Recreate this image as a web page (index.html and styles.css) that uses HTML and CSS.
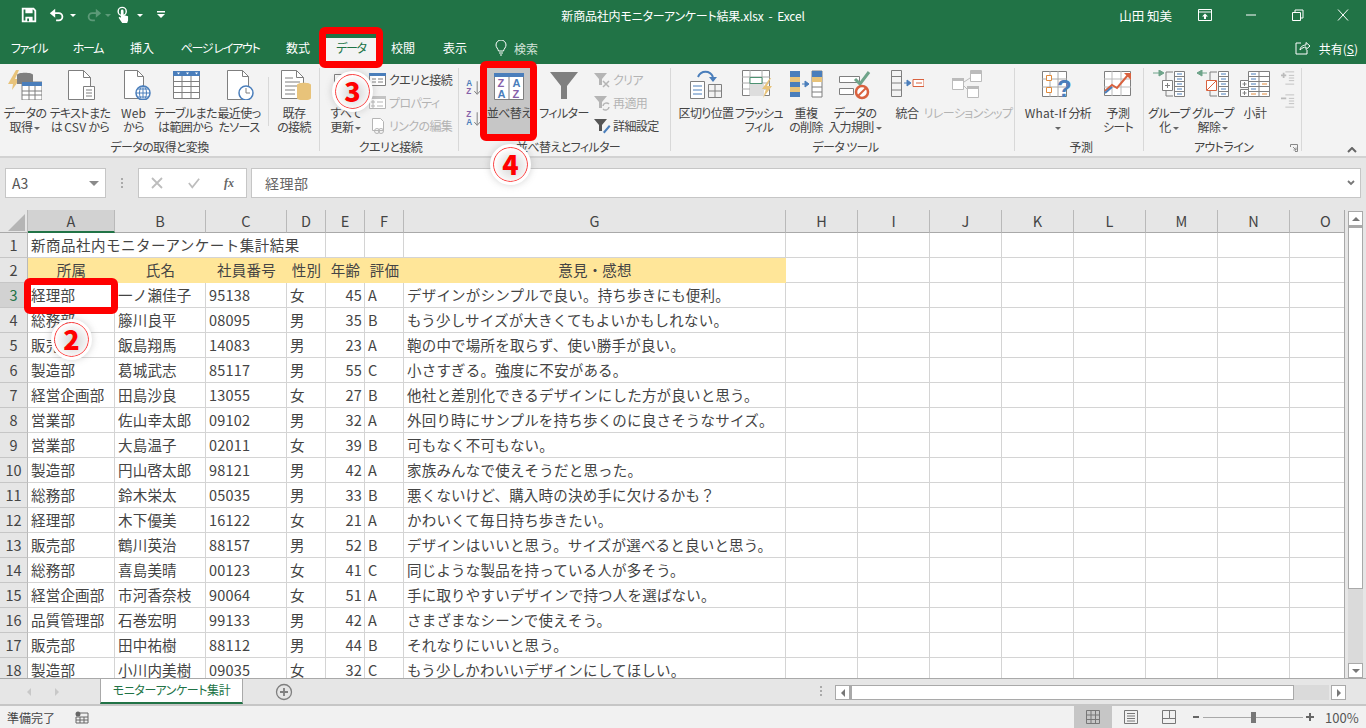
FILE: index.html
```html
<!DOCTYPE html>
<html lang="ja">
<head>
<meta charset="utf-8">
<title>新商品社内モニターアンケート結果.xlsx - Excel</title>
<link rel="stylesheet" href="styles.css">
</head>
<body>
<div class="app">
  <header class="titlebar">
    <div class="qat">
      <svg class="ic20" viewBox="0 0 20 20"><path d="M3 3h12l2 2v12H3z" fill="none" stroke="#fff" stroke-width="2"/><path d="M6 3h8v5H6zM6 12h8v5H6z" fill="#fff"/><path d="M8 14h2v3H8z" fill="#217346"/></svg>
      <svg class="ic20 m10" viewBox="0 0 20 20"><path d="M4 8h8a4 4 0 0 1 0 8H9" fill="none" stroke="#fff" stroke-width="2"/><path d="M8 3v10L2 8z" fill="#fff"/></svg>
      <span class="caret white"></span>
      <svg class="ic20 m9" viewBox="0 0 20 20"><path d="M16 8H8a4 4 0 0 0 0 8h3" fill="none" stroke="#5c9a78" stroke-width="2"/><path d="M12 3v10l6-5z" fill="#5c9a78"/></svg>
      <span class="caret faded"></span>
      <svg class="ic20 m4" viewBox="0 0 20 20"><circle cx="8" cy="6" r="4.500" fill="none" stroke="#fff" stroke-width="1.600"/><path d="M6.500 5.500a1.500 1.500 0 0 1 3 0V10l5 1.500V16l-1 3H8L4 13l1-1 1.500 1z" fill="#fff"/></svg>
      <span class="caret white"></span>
      <svg class="custom" viewBox="0 0 10 10"><path d="M1 1h8v1.500H1zM1 4h8L5 8z" fill="#fff"/></svg>
    </div>
    <div class="doc-title">新商品社内モニターアンケート結果.xlsx &nbsp;-&nbsp; Excel</div>
    <div class="win">
      <span class="user">山田 知美</span>
      <svg class="winic" viewBox="0 0 14 12"><path d="M.5.500h13v11H.500zM.5 3h13" fill="none" stroke="#fff"/><path d="M7 4.500l3 3H8V10H6V7.500H4z" fill="#fff"/></svg>
      <svg class="winic" viewBox="0 0 14 12"><path d="M2 6h10" stroke="#fff"/></svg>
      <svg class="winic" viewBox="0 0 14 12"><path d="M2.500 3.500h8v8h-8zM5 3.500V1h8v8h-2.500" fill="none" stroke="#fff"/></svg>
      <svg class="winic" viewBox="0 0 14 12"><path d="M2 .5l10 11M12 .5l-10 11" stroke="#fff" fill="none"/></svg>
    </div>
  </header>

  <nav class="tabs">
    <span class="tab kana w58">ファイル</span>
    <span class="tab kana w60">ホーム</span>
    <span class="tab w48">挿入</span>
    <span class="tab kana w108">ページ レイアウト</span>
    <span class="tab w48">数式</span>
    <span class="tab kana w58 active">データ</span>
    <span class="tab w46">校閲</span>
    <span class="tab w58">表示</span>
    <span class="search">
      <svg class="bulb" viewBox="0 0 12 16"><path d="M3.500 11C3 8.500 1 7.500 1 5a5 5 0 0 1 10 0c0 2.500-2 3.500-2.500 6zM4 13h4M5 15h2" fill="none" stroke="#fff"/></svg>
      <span>検索</span>
    </span>
    <span class="share">
      <svg class="shareic" viewBox="0 0 16 14"><path d="M6 2H1v11h11V9" fill="none" stroke="#fff"/><path d="M5 9c0-3 3-5 6-5V1.500L15 5l-4 3.500V6C9 6 7 7 5 9z" fill="none" stroke="#fff"/></svg>
      <span>共有(<u>S</u>)</span>
    </span>
  </nav>

  <section class="ribbon">
    <div class="group g1">
      <div class="gbody">
        <div class="big w50"><svg class="bi" viewBox="0 0 34 30"><path d="M8 0L0 14h5l-1 6L12 9H7l4-9z" fill="#e8c37a"/><path d="M9 5c0-3 16-3 16 0v9H9z" fill="#7f7f7f"/><path d="M14 12h20v18H14z" fill="#fff" stroke="#7f7f7f"/><path d="M14 12h20v4H14z" fill="#4a7ebb"/><path d="M14 21h20M14 25h20M21 16v14M27 16v14" stroke="#7f7f7f" fill="none"/></svg><span class="lb">データの<br>取得 <i class="caret"></i></span></div>
        <div class="big w60"><svg class="bi" viewBox="0 0 34 30"><path d="M5.500.5h15l7 7v22h-22z" fill="#fff" stroke="#7f7f7f"/><path d="M20.500.5v7h7" fill="none" stroke="#7f7f7f"/><path d="M20.500 16.500h11v13h-11z" fill="#fff" stroke="#7f7f7f"/><path d="M23 20h6M23 23h6M23 26h6" stroke="#7f7f7f"/></svg><span class="lb">テキストまた<br>は <span class="lat">CSV</span> から</span></div>
        <div class="big w47"><svg class="bi" viewBox="0 0 34 30"><path d="M7.500.5h13l6 6v22h-19z" fill="#fff" stroke="#7f7f7f"/><path d="M20.500.5v6h6" fill="none" stroke="#7f7f7f"/><circle cx="26" cy="23" r="7" fill="#fff" stroke="#4a7ebb" stroke-width="1.500"/><path d="M19 23h14M26 16v14M21 19h10M21 27h10" stroke="#4a7ebb"/><ellipse cx="26" cy="23" rx="3.500" ry="7" fill="none" stroke="#4a7ebb"/></svg><span class="lb"><span class="lat">Web</span><br>から</span></div>
        <div class="big w57"><svg class="bi" viewBox="0 0 34 30"><path d="M4.500 1.500h26v27h-26z" fill="#fff" stroke="#7f7f7f"/><path d="M4 1h27v5H4z" fill="#4a7ebb"/><path d="M4 11.500h27M4 16.500h27M4 22.500h27M13 6v23M22 6v23" stroke="#7f7f7f" fill="none"/><path d="M8 2.500l1.500 2 1.500-2zM17 2.500l1.500 2 1.500-2zM26 2.500l1.500 2 1.500-2z" fill="#fff"/></svg><span class="lb">テーブルまた<br>は範囲から</span></div>
        <div class="big w50"><svg class="bi" viewBox="0 0 34 30"><path d="M5.500.5h15l6 6v23h-21z" fill="#fff" stroke="#7f7f7f"/><path d="M20.500.5v6h6" fill="none" stroke="#7f7f7f"/><circle cx="24" cy="23" r="7" fill="#fff" stroke="#4a7ebb" stroke-width="1.500"/><path d="M24 18v5h4" stroke="#7f7f7f" fill="none"/></svg><span class="lb">最近使っ<br>たソース</span></div>
        <div class="inner-sep"></div>
        <div class="big w44"><svg class="bi" viewBox="0 0 34 30"><path d="M4.500.5h15l7 7v21h-22z" fill="#fff" stroke="#7f7f7f"/><path d="M19.500.5v7h7M8 8h8M8 12h15M8 16h15M8 20h10M8 24h10" fill="none" stroke="#7f7f7f"/><path d="M20 15c0-3 14-3 14 0v13c0 3-14 3-14 0z" fill="#e8c37a"/></svg><span class="lb">既存<br>の接続</span></div>
      </div>
      <div class="glabel">データの取得と変換</div>
    </div>

    <div class="group g2">
      <div class="gbody">
        <div class="big w46"><svg class="bi" viewBox="0 0 34 30"><path d="M5.500 4.500h16v20h-16z" fill="#fff" stroke="#7f7f7f"/></svg><span class="lb">すべて<br>更新 <i class="caret"></i></span></div>
        <div class="smalls">
          <div class="sm"><svg class="si" viewBox="0 0 18 16"><path d="M.5 1.500h16v12H.500z" fill="#fff" stroke="#7f7f7f"/><path d="M0 1h17v3H0z" fill="#4a7ebb"/><path d="M3 7h4M3 10h4M9 7h5M9 10h5" stroke="#7f7f7f"/></svg>クエリと接続</div>
          <div class="sm off"><svg class="si" viewBox="0 0 18 16"><path d="M.5 1.500h16v12H.500z" fill="#fff" stroke="#b5b5b5"/><path d="M0 1h17v3H0z" fill="#c4c4c4"/><path d="M3 6h2v2H3zM3 10h2v2H3zM8 7h6M8 11h6" stroke="#b5b5b5" fill="none"/></svg>プロパティ</div>
          <div class="sm off"><svg class="si" viewBox="0 0 18 16"><path d="M3.500.5h8l3 3v9h-11z" fill="#fff" stroke="#b5b5b5"/><circle cx="8" cy="13" r="2.500" fill="none" stroke="#b5b5b5"/><circle cx="12" cy="13" r="2.500" fill="none" stroke="#b5b5b5"/></svg>リンクの編集</div>
        </div>
      </div>
      <div class="glabel">クエリと接続</div>
    </div>

    <div class="group g3">
      <div class="gbody">
        <div class="sorts">
          <svg class="sorti" viewBox="0 0 18 22"><text x="0" y="10" class="az blue">A</text><text x="0" y="20" class="az purple">Z</text><path d="M13.500 4v15M10 16l3.500 4 3.500-4" fill="none" stroke="#666"/></svg>
          <svg class="sorti" viewBox="0 0 18 22"><text x="0" y="10" class="az purple">Z</text><text x="0" y="20" class="az blue">A</text><path d="M13.500 4v15M10 16l3.500 4 3.500-4" fill="none" stroke="#666"/></svg>
        </div>
        <div class="big w46 pressed"><svg class="bi sortbig" viewBox="0 0 30 27"><path d="M.5.500h29v26H.500z" fill="#fff" stroke="#7f7f7f"/><path d="M0 0h30v4H0z" fill="#4a7ebb"/><path d="M15 4v23" stroke="#7f7f7f"/><text x="3.500" y="14" class="azb purple">Z</text><text x="3.500" y="25" class="azb blue">A</text><text x="18.500" y="14" class="azb blue">A</text><text x="18.500" y="25" class="azb purple">Z</text></svg><span class="lb">並べ替え</span></div>
        <div class="big w54 ml"><svg class="bi" viewBox="0 0 34 30"><path d="M3 2h28L20 16v13h-6V16z" fill="#7f7f7f"/></svg><span class="lb">フィルター</span></div>
        <div class="smalls s3">
          <div class="sm off"><svg class="si" viewBox="0 0 18 16"><path d="M1 1h13L9 7v6H6V7z" fill="#b5b5b5"/><path d="M10 9l6 6M16 9l-6 6" stroke="#b5b5b5" stroke-width="1.500"/></svg>クリア</div>
          <div class="sm off"><svg class="si" viewBox="0 0 18 16"><path d="M1 1h13L9 7v6H6V7z" fill="#b5b5b5"/><path d="M10 11a3.500 3.500 0 0 1 6-2M16 12a3.500 3.500 0 0 1-6 2" fill="none" stroke="#b5b5b5" stroke-width="1.500"/></svg>再適用</div>
          <div class="sm"><svg class="si" viewBox="0 0 18 16"><path d="M1 1h13L9 7v6H6V7z" fill="#555"/><path d="M10 14l6-7 1.500 1.500-6 7z" fill="#4a7ebb"/></svg>詳細設定</div>
        </div>
      </div>
      <div class="glabel">並べ替えとフィルター</div>
    </div>

    <div class="group g4">
      <div class="gbody">
        <div class="big w58"><svg class="bi wide" viewBox="0 0 34 30"><path d="M1.500 11.500h14v17h-14z" fill="#fff" stroke="#7f7f7f"/><path d="M4 16h9M4 20h9M4 24h9" stroke="#4a7ebb"/><path d="M19.500 14.500h13v13h-13zM19.500 21h13M26 14.500v13" fill="none" stroke="#7f7f7f"/><path d="M9 7c3-7 12-7 15 0" fill="none" stroke="#4a7ebb" stroke-width="2"/><path d="M20 7h8l-4 5z" fill="#4a7ebb"/></svg><span class="lb">区切り位置</span></div>
        <div class="big w48"><svg class="bi" viewBox="0 0 34 30"><path d="M.5.500h27v25H.500z" fill="#fff" stroke="#7f7f7f"/><path d="M0 7h28M0 13h28M0 19h28M8 0v26M20 0v26" stroke="#aaa"/><path d="M8 7.500h12v6H8z" fill="#fff" stroke="#4c9272"/><path d="M8 14h14v12H8z" fill="#ddd"/><path d="M28 8l-8 11h4l-3 9 9-12h-5l4-8z" fill="#e8c37a"/></svg><span class="lb">フラッシュ<br>フィル</span></div>
        <div class="big w46"><svg class="bi" viewBox="0 0 34 30"><path d="M1 1h10v26H1z" fill="#4a7ebb"/><path d="M1 7h10v5H1zM1 17h10v5H1z" fill="#e8c37a"/><path d="M23 1h10v26H23z" fill="#fff" stroke="#7f7f7f"/><path d="M23 1h10v6H23z" fill="#4a7ebb"/><path d="M23 7h10v5H23z" fill="#e8c37a"/><path d="M23 17h10M23 22h10" stroke="#7f7f7f"/><path d="M13 14h5M16 11l4 3-4 3z" fill="#4a7ebb" stroke="#4a7ebb"/></svg><span class="lb">重複<br>の削除</span></div>
        <div class="big w52"><svg class="bi" viewBox="0 0 34 30"><path d="M1.500 6.500h20v6h-20zM1.500 18.500h14v6h-14z" fill="#fff" stroke="#7f7f7f"/><path d="M17 9l5 5 9-12" fill="none" stroke="#6fa48a" stroke-width="3"/><circle cx="24" cy="22" r="6" fill="#fff" stroke="#d9623f" stroke-width="2.500"/><path d="M20 26l8-8" stroke="#d9623f" stroke-width="2"/></svg><span class="lb">データの<br>入力規則 <i class="caret"></i></span></div>
        <div class="big w52"><svg class="bi" viewBox="0 0 34 30"><path d="M1.500.5h10v26h-10zM1.500 6.500h10M1.500 13h10M1.500 20h10" fill="none" stroke="#7f7f7f"/><path d="M14 13h5M17 10l4 3-4 3z" fill="#4a7ebb" stroke="#4a7ebb"/><path d="M23 9.500h11v7H23z" fill="#fff" stroke="#d9623f"/><path d="M26 13h6" stroke="#d9623f"/></svg><span class="lb">統合</span></div>
        <div class="big w70 off"><svg class="bi" viewBox="0 0 34 30"><path d="M19.500.5h11v11h-11zM1.500 8.500h11v11h-11zM16.500 16.500h11v11h-11z" fill="#fff" stroke="#bbb"/><path d="M19 1h12v3H19zM1 8h12v3H1zM16 16h12v3H16z" fill="#bbb"/><path d="M13 12l6-4M13 16l4 4" stroke="#bbb"/></svg><span class="lb">リレーションシップ</span></div>
      </div>
      <div class="glabel">データ ツール</div>
    </div>

    <div class="group g5">
      <div class="gbody">
        <div class="big w78"><svg class="bi" viewBox="0 0 34 30"><path d="M1.500 1.500h24v25h-24z" fill="#fff" stroke="#7f7f7f"/><path d="M1 9h25M1 17h25M9 1v26M17 1v26" stroke="#aaa"/><path d="M5.500 5.500h5v5h-5zM5.500 17.500h5v5h-5z" fill="#fff" stroke="#e08a3c"/><text x="16" y="27" class="qm">?</text></svg><span class="lb"><span class="lat">What-If</span> 分析<br><i class="caret"></i></span></div>
        <div class="big w42"><svg class="bi" viewBox="0 0 34 30"><path d="M3.500 1.500h26v24h-26z" fill="#fff" stroke="#7f7f7f"/><path d="M3 9h27M3 17h27M11 1v25M20 1v25" stroke="#bbb"/><path d="M4 21l7-6 5 3 11-13" fill="none" stroke="#d9623f" stroke-width="2"/><path d="M4 23l7-6" stroke="#4a7ebb" stroke-width="2"/><path d="M23 3h7v7z" fill="#d9623f"/></svg><span class="lb">予測<br>シート</span></div>
      </div>
      <div class="glabel">予測</div>
    </div>

    <div class="group g6">
      <div class="gbody">
        <div class="big w46"><svg class="bi" viewBox="0 0 34 30"><path d="M1 3h10M7 0l5 3-5 3z" fill="#6fa48a" stroke="#6fa48a"/><path d="M14 2h7M14 26h7M14 2v8M14 20v6" fill="none" stroke="#7f7f7f"/><path d="M10.500 10.500h10v10h-10zM13 15.500h5M15.500 13v5" fill="#fff" stroke="#7f7f7f"/><path d="M22.500 1.500h10v25h-10zM22.500 6.500h10M22.500 11.500h10M22.500 16.500h10M22.500 21.500h10" fill="#fff" stroke="#7f7f7f"/><path d="M25 4h5M25 9h5M25 14h5M25 19h5M25 24h5" stroke="#4a7ebb"/></svg><span class="lb">グループ<br>化 <i class="caret"></i></span></div>
        <div class="big w42"><svg class="bi" viewBox="0 0 34 30"><path d="M1 3h10M6 0L1 3l5 3z" fill="#6fa48a" stroke="#6fa48a"/><path d="M14 2h7M14 26h7M14 2v8M14 20v6" fill="none" stroke="#7f7f7f"/><path d="M10.500 10.500h10v10h-10z" fill="#fff" stroke="#d9623f"/><path d="M11 20l9-9" stroke="#d9623f"/><path d="M22.500 1.500h10v25h-10zM22.500 6.500h10M22.500 11.500h10M22.500 16.500h10M22.500 21.500h10" fill="#fff" stroke="#7f7f7f"/><path d="M25 4h5M25 9h5M25 14h5M25 19h5M25 24h5" stroke="#4a7ebb"/></svg><span class="lb">グループ<br>解除 <i class="caret"></i></span></div>
        <div class="big w42"><svg class="bi" viewBox="0 0 34 30"><path d="M10.500 1.500h21v25h-21zM10.500 6.500h21M10.500 11.500h21M10.500 16.500h21M10.500 21.500h21M21 1.500v25" fill="#fff" stroke="#7f7f7f"/><path d="M13 4h5M13 9h5M13 14h5M13 19h5" stroke="#4a7ebb"/><path d="M13 24h5M24 14h5M24 24h5" stroke="#e08a3c"/><path d="M2.500 10.500h8v7h-8zM2.500 19.500h8v7h-8zM4.500 14h4M6.500 12v4M4.500 23h4M6.500 21v4" fill="#fff" stroke="#7f7f7f"/></svg><span class="lb">小計</span></div>
        <div class="sorts s6">
          <svg class="oi" viewBox="0 0 16 16"><path d="M0 5h6M3 2v6" stroke="#bbb" stroke-width="2"/><path d="M5 1h10M9 5h6M9 8h6M9 11h6M5 15h10" stroke="#bbb"/></svg>
          <svg class="oi" viewBox="0 0 16 16"><path d="M0 5h6" stroke="#bbb" stroke-width="2"/><path d="M5 1h10M9 5h6M9 8h6M9 11h6M5 15h10" stroke="#bbb"/></svg>
        </div>
      </div>
      <div class="glabel">アウトライン</div>
      <svg class="launch" viewBox="0 0 8 8"><path d="M.5 3V.5H7.500V7.500H5M3 3l3 3M6 3.500V6H3.500" fill="none" stroke="#888"/></svg>
    </div>
    <div class="collapse"><svg viewBox="0 0 10 6"><path d="M1 5l4-4 4 4" fill="none" stroke="#666" stroke-width="2"/></svg></div>
  </section>

  <section class="formula">
    <div class="namebox"><span>A3</span><i class="caret dark"></i></div>
    <div class="dots"><b></b><b></b><b></b></div>
    <div class="fbtns">
      <svg class="fi" viewBox="0 0 12 12"><path d="M1 1l10 10M11 1L1 11" stroke="#bdbdbd" stroke-width="1.800"/></svg>
      <svg class="fi" viewBox="0 0 14 12"><path d="M1 6l4 5 8-10" fill="none" stroke="#bdbdbd" stroke-width="2"/></svg>
      <span class="fx">fx</span>
    </div>
    <div class="finput"><span>経理部</span><svg class="chev" viewBox="0 0 8 6"><path d="M1 1l3 3 3-3" fill="none" stroke="#777" stroke-width="1.800"/></svg></div>
  </section>

  <section class="sheetwrap">
    <div class="sheet">
      <table class="grid">
        <colgroup>
          <col class="c-rh"><col class="c-a"><col class="c-b"><col class="c-c"><col class="c-n"><col class="c-n"><col class="c-n"><col class="c-g">
          <col class="c-h"><col class="c-h"><col class="c-h"><col class="c-h"><col class="c-h"><col class="c-h"><col class="c-h"><col class="c-h">
        </colgroup>
        <thead>
          <tr><th class="corner"><svg viewBox="0 0 17 17"><path d="M17 0v17H0z" fill="#b5b5b5"/></svg></th><th class="sel">A</th><th>B</th><th>C</th><th>D</th><th>E</th><th>F</th><th>G</th><th>H</th><th>I</th><th>J</th><th>K</th><th>L</th><th>M</th><th>N</th><th>O</th></tr>
        </thead>
        <tbody>
          <tr><th>1</th><td colspan="4" class="title">新商品社内モニターアンケート集計結果</td><td></td><td></td><td></td><td></td><td></td><td></td><td></td><td></td><td></td><td></td><td></td></tr>
          <tr class="hd"><th>2</th><td class="h">所属</td><td class="h">氏名</td><td class="h">社員番号</td><td class="h">性別</td><td class="h">年齢</td><td class="h">評価</td><td class="h">意見・感想</td><td></td><td></td><td></td><td></td><td></td><td></td><td></td><td></td></tr>
          <tr><th class="sel">3</th><td>経理部</td><td>一ノ瀬佳子</td><td>95138</td><td>女</td><td class="r">45</td><td>A</td><td>デザインがシンプルで良い。持ち歩きにも便利。</td><td></td><td></td><td></td><td></td><td></td><td></td><td></td><td></td></tr>
          <tr><th>4</th><td>総務部</td><td>籐川良平</td><td>08095</td><td>男</td><td class="r">35</td><td>B</td><td>もう少しサイズが大きくてもよいかもしれない。</td><td></td><td></td><td></td><td></td><td></td><td></td><td></td><td></td></tr>
          <tr><th>5</th><td>販売部</td><td>飯島翔馬</td><td>14083</td><td>男</td><td class="r">23</td><td>A</td><td>鞄の中で場所を取らず、使い勝手が良い。</td><td></td><td></td><td></td><td></td><td></td><td></td><td></td><td></td></tr>
          <tr><th>6</th><td>製造部</td><td>葛城武志</td><td>85117</td><td>男</td><td class="r">55</td><td>C</td><td>小さすぎる。強度に不安がある。</td><td></td><td></td><td></td><td></td><td></td><td></td><td></td><td></td></tr>
          <tr><th>7</th><td>経営企画部</td><td>田島沙良</td><td>13055</td><td>女</td><td class="r">27</td><td>B</td><td>他社と差別化できるデザインにした方が良いと思う。</td><td></td><td></td><td></td><td></td><td></td><td></td><td></td><td></td></tr>
          <tr><th>8</th><td>営業部</td><td>佐山幸太郎</td><td>09102</td><td>男</td><td class="r">32</td><td>A</td><td>外回り時にサンプルを持ち歩くのに良さそうなサイズ。</td><td></td><td></td><td></td><td></td><td></td><td></td><td></td><td></td></tr>
          <tr><th>9</th><td>営業部</td><td>大島温子</td><td>02011</td><td>女</td><td class="r">39</td><td>B</td><td>可もなく不可もない。</td><td></td><td></td><td></td><td></td><td></td><td></td><td></td><td></td></tr>
          <tr><th>10</th><td>製造部</td><td>円山啓太郎</td><td>98121</td><td>男</td><td class="r">42</td><td>A</td><td>家族みんなで使えそうだと思った。</td><td></td><td></td><td></td><td></td><td></td><td></td><td></td><td></td></tr>
          <tr><th>11</th><td>総務部</td><td>鈴木栄太</td><td>05035</td><td>男</td><td class="r">33</td><td>B</td><td>悪くないけど、購入時の決め手に欠けるかも？</td><td></td><td></td><td></td><td></td><td></td><td></td><td></td><td></td></tr>
          <tr><th>12</th><td>経理部</td><td>木下優美</td><td>16122</td><td>女</td><td class="r">21</td><td>A</td><td>かわいくて毎日持ち歩きたい。</td><td></td><td></td><td></td><td></td><td></td><td></td><td></td><td></td></tr>
          <tr><th>13</th><td>販売部</td><td>鶴川英治</td><td>88157</td><td>男</td><td class="r">52</td><td>B</td><td>デザインはいいと思う。サイズが選べると良いと思う。</td><td></td><td></td><td></td><td></td><td></td><td></td><td></td><td></td></tr>
          <tr><th>14</th><td>総務部</td><td>喜島美晴</td><td>00123</td><td>女</td><td class="r">41</td><td>C</td><td>同じような製品を持っている人が多そう。</td><td></td><td></td><td></td><td></td><td></td><td></td><td></td><td></td></tr>
          <tr><th>15</th><td>経営企画部</td><td>市河香奈枝</td><td>90064</td><td>女</td><td class="r">51</td><td>A</td><td>手に取りやすいデザインで持つ人を選ばない。</td><td></td><td></td><td></td><td></td><td></td><td></td><td></td><td></td></tr>
          <tr><th>16</th><td>品質管理部</td><td>石巻宏明</td><td>99133</td><td>男</td><td class="r">42</td><td>A</td><td>さまざまなシーンで使えそう。</td><td></td><td></td><td></td><td></td><td></td><td></td><td></td><td></td></tr>
          <tr><th>17</th><td>販売部</td><td>田中祐樹</td><td>88112</td><td>男</td><td class="r">44</td><td>B</td><td>それなりにいいと思う。</td><td></td><td></td><td></td><td></td><td></td><td></td><td></td><td></td></tr>
          <tr><th>18</th><td>製造部</td><td>小川内美樹</td><td>09035</td><td>女</td><td class="r">32</td><td>C</td><td>もう少しかわいいデザインにしてほしい。</td><td></td><td></td><td></td><td></td><td></td><td></td><td></td><td></td></tr>
        </tbody>
      </table>
    </div>
    <div class="vscroll">
      <div class="sbtn"><i class="tri up"></i></div>
      <div class="vthumb"></div>
      <div class="vtrack"></div>
      <div class="sbtn"><i class="tri down"></i></div>
    </div>
  </section>

  <section class="tabbar">
    <div class="navs"><i class="tri left pale"></i><i class="tri right pale"></i></div>
    <div class="sheettab">モニターアンケート集計</div>
    <svg class="addsheet" viewBox="0 0 18 18"><circle cx="9" cy="9" r="7.500" fill="none" stroke="#7f7f7f" stroke-width="1.300"/><path d="M5 9h8M9 5v8" stroke="#7f7f7f" stroke-width="1.800"/></svg>
    <div class="hdots"><b></b><b></b><b></b></div>
    <div class="hscroll">
      <div class="sbtn h"><i class="tri left"></i></div>
      <div class="hthumb"></div>
      <div class="htrack"></div>
      <div class="sbtn h"><i class="tri right"></i></div>
    </div>
  </section>

  <footer class="status">
    <span class="ready">準備完了</span>
    <svg class="macro" viewBox="0 0 14 13"><circle cx="3" cy="3" r="2.500" fill="#666"/><path d="M5 2h8v10H1V6h12M1 9h12M5 6v6M9 6v6" fill="none" stroke="#666"/></svg>
    <div class="views">
      <div class="view on"><svg viewBox="0 0 14 14"><path d="M.5.500h13v13H.500zM.5 5h13M.5 9.500h13M5 .5v13M9.500.5v13" fill="none" stroke="#777"/></svg></div>
      <div class="view"><svg viewBox="0 0 14 14"><path d="M.5.500h13v13H.500z" fill="none" stroke="#777"/><path d="M3 3.500h8M3 6h8M3 8.500h8M3 11h8" stroke="#777"/></svg></div>
      <div class="view"><svg viewBox="0 0 14 14"><path d="M.5.500h13v13H.500zM.5 8.500h7v-8M7.500 8.500h6" fill="none" stroke="#777"/></svg></div>
    </div>
    <div class="zoom">
      <span class="zm"></span>
      <div class="zline"><i></i></div>
      <span class="zp"></span>
    </div>
    <span class="pct">100%</span>
  </footer>

  <div class="mark m-tab"></div>
  <div class="mark m-cell"></div>
  <div class="mark m-sort"></div>
  <div class="num n2">2</div>
  <div class="num n3">3</div>
  <div class="num n4">4</div>
</div>
</body>
</html>
```
FILE: styles.css
```css
* { box-sizing: border-box; }
html, body { margin: 0; padding: 0; }
body { font-family: "Noto Sans CJK JP", "Liberation Sans", sans-serif; color: #444; overflow: hidden; background: #e6e6e6; }
.app { position: relative; width: 1366px; height: 728px; display: flex; flex-direction: column; overflow: hidden; }

/* title bar */
.titlebar { height: 38px; background: #217346; color: #fff; display: grid; grid-template-columns: 1fr auto 1fr; align-items: center; font-size: 12px; font-feature-settings: "palt"; flex: none; padding-bottom: 8px; }
.qat { display: flex; align-items: center; padding-left: 20px; }
.ic20 { width: 18px; height: 18px; }
.m4 { margin-left: 4px; } .m9 { margin-left: 9px; } .m10 { margin-left: 10px; }
.custom { width: 10px; height: 10px; margin-left: 13px; }
.caret { display: inline-block; width: 0; height: 0; border: 3px solid transparent; border-top-color: #666; border-bottom: 0; vertical-align: middle; }
.caret.white { border-top-color: #fff; margin-left: 4px; }
.caret.faded { border-top-color: #5c9a78; margin-left: 2px; }
.caret.dark { border-width: 5px; border-bottom: 0; border-top-color: #8a8a8a; }
.doc-title { white-space: nowrap; font-size: 12px; letter-spacing: -.2px; }
.win { display: flex; align-items: center; justify-content: flex-end; }
.user { font-size: 12.500px; margin-right: 26px; }
.winic { width: 14px; height: 12px; margin-right: 32px; }
.winic:last-child { margin-right: 16px; }

/* tabs */
.tabs { height: 26px; background: #217346; color: #fff; display: flex; align-items: center; font-size: 12px; font-feature-settings: "palt"; flex: none; }
.tab { text-align: center; height: 26px; line-height: 20px; white-space: nowrap; }
.kana { letter-spacing: -1.300px; }
.w58 { width: 58px; } .w60 { width: 60px; } .w48 { width: 48px; } .w108 { width: 108px; } .w46 { width: 46px; }
.w50 { width: 50px; } .w47 { width: 47px; } .w57 { width: 57px; } .w44 { width: 44px; } .w54 { width: 54px; }
.w52 { width: 52px; } .w70 { width: 70px; } .w78 { width: 78px; } .w42 { width: 42px; }
.tab.active { background: #f3f3f3; color: #217346; }
.search { display: flex; align-items: center; gap: 7px; margin-left: 11px; height: 26px; padding-bottom: 6px; color: #d3e3da; }
.bulb { width: 12px; height: 16px; }
.share { margin-left: auto; padding-right: 8px; display: flex; align-items: center; gap: 8px; height: 26px; padding-bottom: 6px; font-size: 12px; }
.shareic { width: 16px; height: 14px; }

/* ribbon */
.ribbon { height: 94px; background: #f3f3f3; border-bottom: 2px solid #d2d2d2; display: flex; position: relative; flex: none; font-size: 12px; font-feature-settings: "palt"; letter-spacing: -.6px; color: #444; }
.group { display: flex; flex-direction: column; border-right: 1px solid #d8d8d8; margin: 4px 0 5px; position: relative; flex: none; }
.g1 { width: 320px; }
.g2 { width: 139px; padding-left: 3px; }
.g3 { width: 212px; padding-left: 7px; }
.g4 { width: 344px; padding-left: 6px; }
.g5 { width: 129px; padding-left: 4px; }
.g6 { width: 158px; padding-left: 2px; }
.gbody { display: flex; flex: 1; min-height: 0; }
.glabel { height: 17px; line-height: 16px; text-align: center; white-space: nowrap; margin-bottom: -5px; }
.big { display: flex; flex-direction: column; align-items: center; flex: none; padding-top: 2px; }
.bi { width: 34px; height: 30px; flex: none; margin-bottom: 6px; }
.lb { line-height: 14px; text-align: center; white-space: nowrap; }
.lat { letter-spacing: .2px; }
.big.off .lb { color: #b3b3b3; }
.big.pressed { background: #c6c6c6; height: 69px; }
.sortbig { width: 30px; height: 27px; margin-top: 3px; margin-bottom: 6px; }
.ml { margin-left: 5px; }
.inner-sep { width: 1px; background: #d8d8d8; margin: 9px 3px 13px 4px; flex: none; }
.smalls { display: flex; flex-direction: column; }
.sm { display: flex; align-items: center; gap: 2px; height: 23px; white-space: nowrap; }
.sm.off { color: #b3b3b3; }
.si { width: 18px; height: 16px; flex: none; }
.s3 { margin-left: 2px; }
.sorts { display: flex; flex-direction: column; gap: 13px; padding-top: 10px; width: 20px; flex: none; }
.sorti { width: 15px; height: 18px; }
.az { font: bold 10px "Liberation Sans", sans-serif; letter-spacing: 0; }
.azb { font: bold 11px "Liberation Sans", sans-serif; letter-spacing: 0; }
.blue { fill: #4a7ebb; }
.purple { fill: #8560a8; }
.qm { font: bold 24px "Liberation Sans", sans-serif; fill: #4a7ebb; letter-spacing: 0; }
.s6 { padding-top: 3px; margin-left: 4px; gap: 9px; }
.oi { width: 16px; height: 14px; }
.launch { width: 8px; height: 8px; position: absolute; right: 3px; bottom: -1px; }
.collapse { position: absolute; left: 1347px; top: 83px; width: 10px; height: 6px; display: flex; }
.collapse svg { width: 10px; height: 6px; }

/* formula bar */
.formula { height: 52px; flex: none; background: #e6e6e6; display: flex; align-items: flex-start; padding: 10px 5px 0; }
.namebox { width: 101px; height: 30px; background: #fff; border: 1px solid #c6c6c6; display: flex; align-items: center; justify-content: space-between; padding: 0 6px; font-size: 14px; color: #555; }
.dots { width: 32px; height: 30px; display: flex; flex-direction: column; align-items: center; justify-content: center; gap: 2px; }
.dots b, .hdots b { width: 2px; height: 2px; background: #aaa; display: block; }
.fbtns { width: 109px; height: 30px; background: #fff; border: 1px solid #c6c6c6; display: flex; align-items: center; padding: 0 12px; justify-content: space-between; }
.fi { width: 12px; height: 12px; }
.fx { font: italic bold 12px "Liberation Serif", serif; color: #666; }
.finput { flex: 1; height: 30px; margin-left: 4px; background: #fff; border: 1px solid #c6c6c6; display: flex; align-items: center; justify-content: space-between; padding: 0 5px 0 13px; font-size: 14px; color: #666; letter-spacing: .5px; }
.chev { width: 8px; height: 6px; }

/* sheet */
.sheetwrap { height: 469px; flex: none; background: #e6e6e6; display: flex; border-bottom: 1px solid #a9a9a9; }
.sheet { width: 1345px; height: 468px; overflow: hidden; border-right: 1px solid #a9a9a9; background: #fff; }
.grid { border-collapse: separate; border-spacing: 0; table-layout: fixed; width: 1362px; font-size: 14.500px; color: #444; }
.c-rh { width: 28px; } .c-a { width: 87px; } .c-b { width: 91px; } .c-c { width: 81px; } .c-n { width: 39px; } .c-g { width: 382px; } .c-h { width: 72px; }
.grid tr { height: 25px; }
.grid thead tr { height: 23px; }
.grid th { background: #e6e6e6; font-weight: 400; font-size: 14.500px; color: #444; padding: 0; text-align: center; border-right: 1px solid #b9b9b9; border-bottom: 1px solid #a9a9a9; line-height: 20px; }
.grid tbody th { border-bottom: 1px solid #c6c6c6; }
.grid th.sel { background: #d2d2d2; color: #217346; }
.grid thead th.sel { border-bottom: 2px solid #217346; color: #444; }
.corner { position: relative; }
.corner svg { width: 17px; height: 17px; display: block; margin: 2px 0 0 8px; }
.grid td { border-right: 1px solid #d4d4d4; border-bottom: 1px solid #d4d4d4; padding: 0 2px 0 3px; white-space: nowrap; overflow: hidden; line-height: 20px; letter-spacing: .2px; }
.grid td.title { letter-spacing: .5px; overflow: visible; }
.grid td.r { text-align: right; }
.grid td.h { background: #ffe699; border-right-color: #ffe699; border-bottom-color: #ffe699; text-align: center; }
.vscroll { flex: 1; display: flex; flex-direction: column; padding: 1px 3px 0 3px; }
.sbtn { height: 15px; width: 15px; background: #fff; border: 1px solid #a9a9a9; display: flex; align-items: center; justify-content: center; flex: none; }
.vthumb { height: 363px; background: #fff; border: 1px solid #a9a9a9; border-top-width: 2px; flex: none; }
.vtrack { flex: 1; background: #dadada; }
.tri { display: block; width: 0; height: 0; border: 4px solid transparent; }
.tri.up { border-top: 0; border-bottom-color: #777; }
.tri.down { border-bottom: 0; border-top-color: #777; }
.tri.left { border-left: 0; border-right-color: #777; }
.tri.right { border-right: 0; border-left-color: #777; }
.tri.left.pale { border-right-color: #c8c8c8; }
.tri.right.pale { border-left-color: #c8c8c8; }

/* sheet tabs */
.tabbar { height: 27px; flex: none; background: #e6e6e6; border-bottom: 2px solid #c6c6c6; display: flex; align-items: flex-start; position: relative; }
.navs { width: 100px; height: 25px; display: flex; align-items: center; gap: 24px; padding-left: 27px; }
.sheettab { width: 143px; height: 25px; background: #fff; border: 1px solid #a9a9a9; border-top: 0; border-bottom: 2px solid #217346; color: #217346; font-size: 12px; font-feature-settings: "palt"; letter-spacing: -.4px; text-align: center; line-height: 22px; white-space: nowrap; }
.addsheet { width: 18px; height: 18px; margin: 4px 0 0 32px; }
.hdots { margin-left: 527px; display: flex; flex-direction: column; gap: 2px; padding-top: 7px; width: 15px; }
.hscroll { display: flex; align-items: center; height: 15px; margin: 6px 0 0 0; width: 511px; }
.sbtn.h { height: 15px; width: 15px; }
.hthumb { width: 444px; height: 15px; background: #fff; border: 1px solid #a9a9a9; border-left-width: 2px; flex: none; }
.htrack { flex: 1; height: 15px; background: #dadada; margin-right: 2px; }

/* status */
.status { height: 22px; flex: none; background: #f1f1f1; display: flex; align-items: center; font-size: 12px; font-feature-settings: "palt"; padding-left: 7px; color: #444; }
.ready { width: 68px; }
.macro { width: 14px; height: 13px; }
.views { display: flex; margin-left: 985px; height: 22px; flex: none; }
.view { width: 38px; height: 22px; display: flex; align-items: center; justify-content: center; }
.view svg { width: 14px; height: 14px; }
.view.on { background: #c6c6c6; }
.zoom { display: flex; align-items: center; flex: none; }
.zm { width: 6px; height: 2px; background: #666; margin-left: 5px; margin-right: 4px; }
.zp { width: 8px; height: 8px; background: linear-gradient(#666, #666) center / 8px 2px no-repeat, linear-gradient(#666, #666) center / 2px 8px no-repeat; margin-left: 3px; }
.zline { width: 100px; height: 1px; background: #a9a9a9; position: relative; }
.zline i { position: absolute; left: 48px; top: -5px; width: 5px; height: 11px; background: #777; }
.pct { margin-left: 11px; font-size: 13px; color: #555; white-space: nowrap; }

/* screenshot annotations */
.mark { position: absolute; border: 7px solid #f00; border-radius: 6px; }
.m-tab { left: 319px; top: 27px; width: 64px; height: 41px; }
.m-cell { left: 24px; top: 278px; width: 94px; height: 36px; }
.m-sort { left: 480px; top: 61px; width: 57px; height: 80px; }
.num { position: absolute; width: 35px; height: 35px; border-radius: 50%; background: radial-gradient(circle at 55% 55%, #d4d4d4 0, #efefef 45%, #fff 70%); border: 1px solid #f33; outline: 3px solid #fff; box-shadow: 0 0 6px 4px rgba(120,120,120,.25); color: #f00; font: 900 27px/32px "Noto Sans CJK JP", sans-serif; text-align: center; }
.n2 { left: 54px; top: 322px; }
.n3 { left: 335px; top: 74px; }
.n4 { left: 493px; top: 147px; }
```
